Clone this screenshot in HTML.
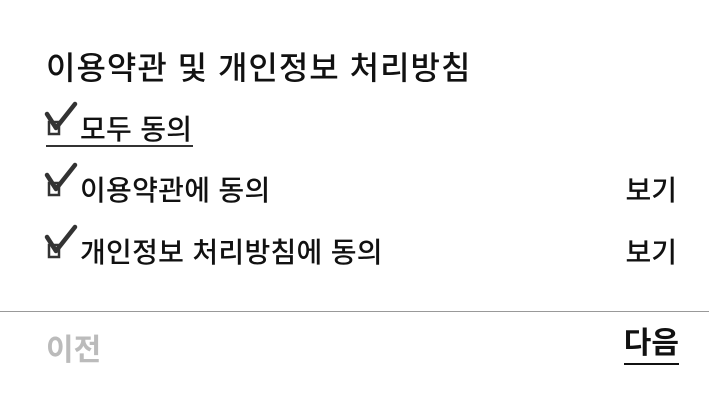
<!DOCTYPE html>
<html><head><meta charset="utf-8"><style>
body{margin:0;width:709px;height:404px;background:#fff;font-family:"Liberation Sans","Noto Sans CJK KR",sans-serif;color:#111;position:relative;overflow:hidden}
.t{position:absolute;left:46px;top:43px;font-size:32px;font-weight:500;white-space:nowrap;letter-spacing:1px}
.row{position:absolute;left:46px;font-size:28px;font-weight:500;white-space:nowrap;letter-spacing:0.3px}
.row span.l{position:absolute;left:34px;top:0}
.see{position:absolute;right:32px;font-size:28px;font-weight:500}
.cb{position:absolute;left:0;top:0;overflow:visible}
.hr{position:absolute;left:0;top:311px;width:709px;height:1px;background:#999}
.prev{position:absolute;left:46px;top:325px;font-size:30px;font-weight:700;color:#bbb}
.next{position:absolute;right:30px;top:325px;font-size:30px;font-weight:700;border-bottom:2px solid #111;line-height:38px}
</style></head><body>
<div class="t">이용약관 및 개인정보 처리방침</div>

<div class="row" style="top:110px;width:147px;height:35px;border-bottom:2px solid #333">
<svg class="cb" width="34" height="34" viewBox="0 0 34 34"><rect x="3" y="12" width="10" height="12" fill="none" stroke="#333" stroke-width="2.5"/><path d="M1 4 L10 18 L29 -6" fill="none" stroke="#333" stroke-width="4.5" stroke-linecap="round" stroke-linejoin="round"/></svg>
<span class="l" style="top:-2px">모두 동의</span></div>

<div class="row" style="top:171px;height:35px">
<svg class="cb" width="34" height="34" viewBox="0 0 34 34"><rect x="3" y="12" width="10" height="12" fill="none" stroke="#333" stroke-width="2.5"/><path d="M1 4 L10 18 L29 -6" fill="none" stroke="#333" stroke-width="4.5" stroke-linecap="round" stroke-linejoin="round"/></svg>
<span class="l" style="top:-2px">이용약관에 동의</span></div>
<div class="see" style="top:169px">보기</div>

<div class="row" style="top:233px;height:35px">
<svg class="cb" width="34" height="34" viewBox="0 0 34 34"><rect x="3" y="12" width="10" height="12" fill="none" stroke="#333" stroke-width="2.5"/><path d="M1 4 L10 18 L29 -6" fill="none" stroke="#333" stroke-width="4.5" stroke-linecap="round" stroke-linejoin="round"/></svg>
<span class="l" style="top:-2px">개인정보 처리방침에 동의</span></div>
<div class="see" style="top:231px">보기</div>

<div class="hr"></div>
<div class="prev">이전</div>
<div class="next">다음</div>
</body></html>
